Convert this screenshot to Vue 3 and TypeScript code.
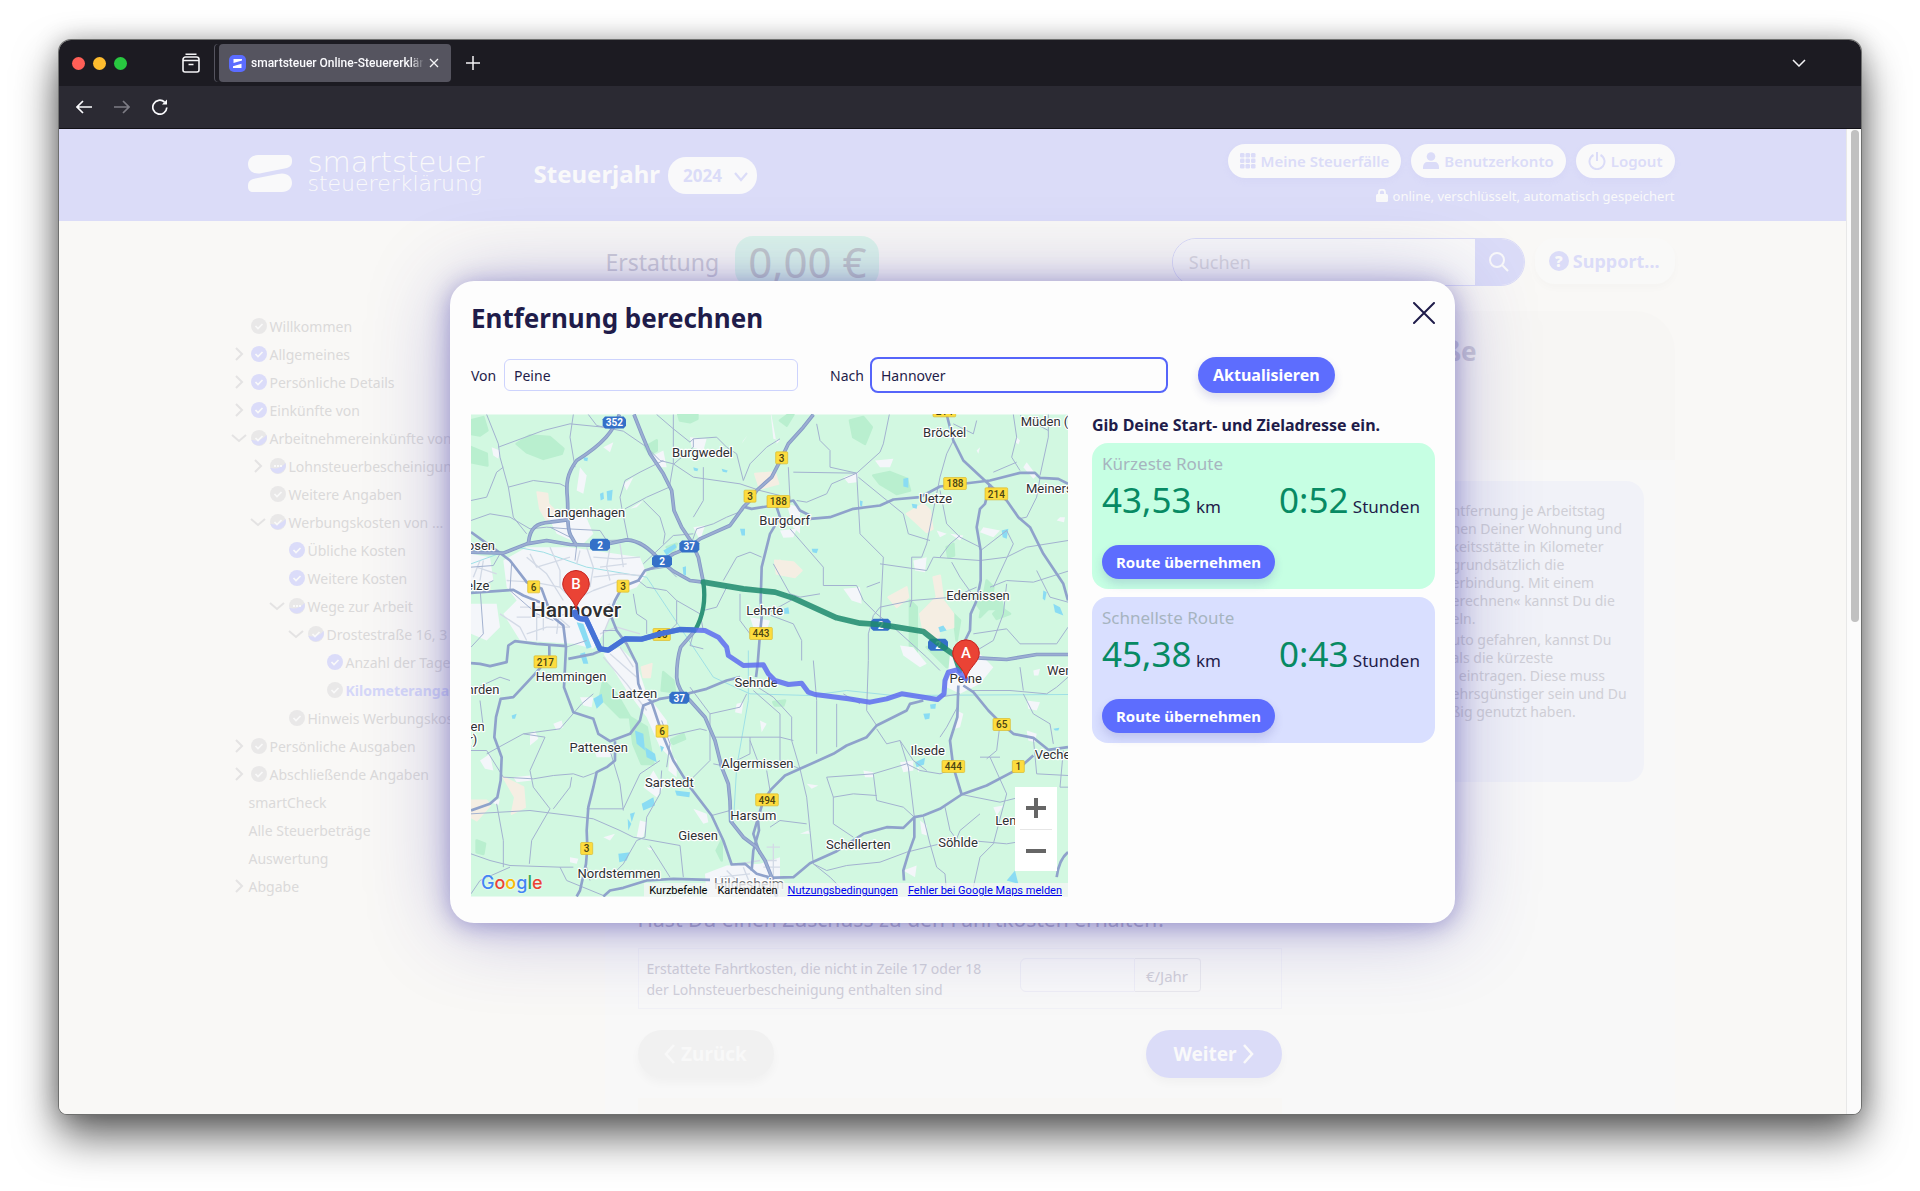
<script setup lang="ts">
import { ref } from 'vue'

type Status = 'done' | 'open' | 'half' | 'dots' | ''
interface NavItem {
  label: string
  level: number
  chevron: '' | 'right' | 'down'
  status: Status
  active?: boolean
}

const nav: NavItem[] = [
  { label: 'Willkommen', level: 0, chevron: '', status: 'open' },
  { label: 'Allgemeines', level: 0, chevron: 'right', status: 'done' },
  { label: 'Persönliche Details', level: 0, chevron: 'right', status: 'done' },
  { label: 'Einkünfte von', level: 0, chevron: 'right', status: 'done' },
  { label: 'Arbeitnehmereinkünfte von', level: 0, chevron: 'down', status: 'half' },
  { label: 'Lohnsteuerbescheinigung', level: 1, chevron: 'right', status: 'dots' },
  { label: 'Weitere Angaben', level: 1, chevron: '', status: 'open' },
  { label: 'Werbungskosten von ...', level: 1, chevron: 'down', status: 'half' },
  { label: 'Übliche Kosten', level: 2, chevron: '', status: 'done' },
  { label: 'Weitere Kosten', level: 2, chevron: '', status: 'done' },
  { label: 'Wege zur Arbeit', level: 2, chevron: 'down', status: 'dots' },
  { label: 'Drostestraße 16, 3', level: 3, chevron: 'down', status: 'half' },
  { label: 'Anzahl der Tage', level: 4, chevron: '', status: 'done' },
  { label: 'Kilometerangabe', level: 4, chevron: '', status: 'open', active: true },
  { label: 'Hinweis Werbungskosten', level: 2, chevron: '', status: 'open' },
  { label: 'Persönliche Ausgaben', level: 0, chevron: 'right', status: 'open' },
  { label: 'Abschließende Angaben', level: 0, chevron: 'right', status: 'open' },
  { label: 'smartCheck', level: 0, chevron: '', status: '' },
  { label: 'Alle Steuerbeträge', level: 0, chevron: '', status: '' },
  { label: 'Auswertung', level: 0, chevron: '', status: '' },
  { label: 'Abgabe', level: 0, chevron: 'right', status: '' },
]

const helpA = ['ntfernung je Arbeitstag', 'hen Deiner Wohnung und', 'keitsstätte in Kilometer', 'grundsätzlich die', 'erbindung. Mit einem', 'erechnen« kannst Du die', 'eln.']
const helpB = ['uto gefahren, kannst Du', 'als die kürzeste', 'l eintragen. Diese muss', 'ehrsgünstiger sein und Du', 'ßig genutzt haben.']

const from = ref('Peine')
const to = ref('Hannover')

const routes = [
  { name: 'Kürzeste Route', km: '43,53', time: '0:52', tone: 'green' },
  { name: 'Schnellste Route', km: '45,38', time: '0:43', tone: 'blue' },
]

const motorways = [
  'M478 42C462 90 430 130 350 180C320 220 318 250 322 290C326 340 318 380 332 405L350 436',
  'M522 42L545 100L570 160L610 220L635 270L642 330L665 380L695 425L715 470L730 545',
  'M705 690L662 740C652 770 650 810 650 830C652 860 665 880 690 900L735 950L765 1020L785 1100L805 1150L810 1200L812 1262L850 1310L890 1340L915 1380L935 1430L950 1488',
  'M33 455L130 458L200 430L260 420L330 432L420 435L500 418C540 420 570 445 600 480L640 512L690 540L730 545',
  'M600 485L640 460L690 440L720 415L760 397L810 375L850 320L870 300L890 270L935 230L965 172L985 130L1030 80L1060 42',
  'M205 428C210 380 230 368 270 365L322 358',
  'M1550 772L1640 777L1730 762L1824 762',
]
const highways = [
  'M600 495L555 510L535 540L488 558L465 600L450 640L470 690L500 730L530 790L535 850L545 875L575 905L605 995L640 1080L690 1160L755 1245L790 1320L815 1392L855 1390L890 1420L935 1432',
  'M33 395L110 450L150 480L200 545L245 565L265 620L285 655L310 675L318 740L315 800L312 860L340 935L400 955L415 1000L450 1022L510 1000L540 960L550 915L600 895L660 885L740 865L800 840L840 830',
  'M33 577L160 568L190 585L240 605',
  'M33 788L60 790L90 797L140 785L145 735L165 722L230 730L320 737',
  'M325 775L400 760L430 748',
  'M268 735L268 770L225 820L160 890L122 895L108 950L103 1010L125 1070L122 1140L112 1190L90 1210L33 1230',
  'M465 1022L465 1080L440 1100L410 1115L400 1160L385 1220L380 1290L382 1340L378 1390L360 1470L350 1488',
  'M430 1488L450 1470L490 1462L560 1440L640 1435L750 1438',
  'M920 1432L1000 1430L1050 1388L1130 1352L1210 1300L1280 1280L1330 1282L1363 1250L1390 1245L1440 1225L1505 1182L1580 1155L1675 1105L1720 1065',
  'M1495 855L1492 950L1470 1020L1480 1100L1505 1182',
  'M1363 1250L1363 1310L1345 1360L1330 1410L1332 1440',
  'M900 1360L880 1300L895 1250L910 1200L935 1165L975 1125L1020 1105L1120 1060L1160 1035L1220 1010L1250 975L1340 930L1350 910L1390 900',
  'M1510 855L1540 875L1585 930L1625 970L1660 1000L1720 1012L1765 1048L1824 1040',
  'M1460 42L1480 120L1510 180L1580 245L1640 300L1675 350L1710 380L1750 460L1810 550L1824 600',
  'M1050 355L1110 350L1180 325L1260 315L1300 297L1380 290L1440 258L1590 240L1680 217L1725 217L1740 232L1795 235L1824 250',
  'M855 320L875 325L940 315L1000 300L1020 330L1050 345',
  'M950 320L960 350L930 400L905 500L902 600L905 650L900 700L893 790L888 830',
  'M1590 250L1575 310L1560 325L1550 380L1562 450L1562 540L1550 600L1532 640L1530 690L1515 720',
  'M893 1250L897 1290L880 1350L875 1410',
  'M1790 1430C1795 1390 1805 1370 1824 1355',
]
const roads = [
  'M80 42L115 130L120 170L145 260L160 350L200 400',
  'M115 140L250 90L330 70L430 80L490 92L560 140L600 180L640 190L700 230L840 250L900 270L960 285',
  'M340 42L330 110L345 200', 'M385 42L410 75L440 82', 'M145 260L220 240L300 250L320 260',
  'M33 300L80 290L110 215L130 200', 'M33 500L100 495L120 460', 'M33 360L90 340L150 350L210 385L260 380L322 385',
  'M590 42L640 85L690 125L700 115L770 110L800 140L830 160L850 240', 'M640 42L640 190L628 260',
  'M628 260L560 290L495 325', 'M610 180L540 215L495 240L480 290L485 320L505 420', 'M550 300L600 350L615 400L610 430',
  'M730 200L730 300L700 350', 'M642 190L700 140L700 115', 'M690 440L710 385L760 370L800 350L850 330', 'M850 240L870 190L920 140L960 115',
  'M322 385L420 390L440 420L500 418', 'M330 410L270 380', 'M350 436L345 480',
  'M550 490L640 405L700 400', 'M790 540L830 470L870 455L905 470', 'M800 560L770 620L730 630', 'M840 580L840 660L870 700',
  'M535 540L560 560L620 570L650 600L650 670L620 700', 'M555 510L620 500L650 530', 'M520 580L530 640L560 660L560 700',
  'M470 690L430 690L430 748', 'M100 540L60 560L70 700L33 740', 'M155 485L150 570L230 640L280 660',
  'M318 740L380 720', 'M650 600L720 640L730 690',
  'M1288 42L1270 130L1260 155L1190 218L1115 250L1100 280L1040 305L1010 300', 'M1480 120L1460 160L1440 230L1400 430L1385 470L1355 470L1355 600L1350 620',
  'M1070 70L1080 120L1110 150L1110 200L1190 218', 'M1190 218L1200 400L1270 470L1260 670', 'M990 385L1090 500L1090 555L1190 555L1210 600L1250 640',
  'M1195 230L1330 340L1345 400L1410 420', 'M1260 490L1400 510L1420 470L1560 480L1640 470L1700 440L1824 420',
  'M1355 600L1260 620L1240 645L1225 700L1225 780L1220 930L1250 975', 'M1355 600L1480 590L1550 560', 'M1220 560L1260 545',
  'M1250 640L1300 680L1400 770L1440 810', 'M1440 270L1460 370L1500 410L1560 440', 'M1475 485L1500 530L1550 600', 'M1440 470L1470 430L1500 405',
  'M1562 450L1640 390L1660 430L1600 560', 'M1590 560L1640 540L1720 545L1824 512', 'M1640 550L1630 640L1600 720L1550 750', 'M1540 700L1640 685L1680 730L1790 730L1824 680',
  'M1740 232L1730 290L1700 350L1675 355', 'M1765 42L1765 110L1740 225', 'M1660 42L1670 110L1655 170L1680 210', 'M1765 90L1680 45', 'M1550 60L1540 100L1480 70',
  'M1730 510L1770 590L1824 605', 'M1600 215L1670 185', 'M985 200L990 300', 'M1000 215L1190 218', 'M940 490L990 580L1020 590L1080 580', 'M1010 590L920 640L1000 670L1025 720L1025 780',
  'M33 870L120 830L150 840', 'M60 900L70 980', 'M33 1050L80 1050L130 1130L220 1135L280 1125L340 1120L370 1130L410 1115',
  'M80 1060L190 1000L300 985L365 910L400 880', 'M190 1000L255 1010L210 1110L220 1160L270 1225', 'M33 1240L210 1230L330 1245L400 1255L480 1290L520 1310L660 1335',
  'M270 1225L215 1320L208 1390', 'M280 1225L330 1160L335 1130', 'M33 1360L90 1380L150 1395L300 1400L340 1400', 'M33 1480L60 1440L150 1400',
  'M300 1400L320 1440L430 1485', 'M380 1225L490 1225L540 1120L600 1080', 'M450 1050L480 1150L490 1230', 'M605 1110L600 1180L560 1250L555 1310L530 1320L490 1390L450 1430',
  'M570 1335L630 1430', 'M660 1335L670 1430', 'M390 1440L380 1400', 'M110 1210L130 1320L130 1400',
  'M605 960L630 1030L620 1100', 'M610 1010L720 985L740 990', 'M690 860L750 940L750 1080L690 1140', 'M750 940L840 920L860 880', 'M760 1090L785 1095',
  'M760 1010L960 1010L1000 1020', 'M880 870L960 940L960 1080L1020 1105', 'M893 860L940 890L995 950L995 1020L1020 1105', 'M870 1010L870 1060L830 1080', 'M755 1245L810 1230',
  'M930 1170L920 1110', 'M900 1100L870 1020', 'M1020 1105L1040 1190L1050 1290L1060 1390', 'M1100 1130L1240 1120L1340 1090L1380 1110', 'M1250 985L1280 1030L1320 1020L1345 1100L1363 1250',
  'M1240 1120L1250 1200L1330 1220L1363 1250', 'M1100 1130L1120 1190L1120 1270L1180 1310', 'M1120 1190L1180 1180L1250 1185', 'M930 1280L960 1260L1040 1270',
  'M1060 780L1070 900L1070 1060', 'M1130 910L1130 1040', 'M1150 880L1200 910', 'M1505 1182L1620 1205L1640 1200L1680 1190', 'M1590 1070L1640 1180L1600 1330L1560 1370L1540 1460',
  'M1060 1390L1110 1430L1150 1470', 'M1060 1390L1100 1410L1160 1395L1260 1385L1340 1355L1440 1330', 'M1390 1250L1410 1330L1430 1400L1455 1420L1460 1480', 'M1380 1110L1440 1120L1480 1105',
  'M1455 1220L1470 1290L1500 1330', 'M1560 1240L1500 1290L1480 1340', 'M1530 1320L1640 1330L1700 1320', 'M1320 1020L1360 1080L1400 1110',
  'M1492 920L1460 980L1440 1010', 'M1530 870L1650 870L1760 880L1790 860L1824 830', 'M1680 800L1690 870', 'M1620 970L1610 1050L1580 1075', 'M1690 880L1720 940L1770 970L1780 1030', 'M1500 880L1440 890',
  'M1720 1012L1730 1120L1824 1125', 'M1810 1050L1800 1160L1824 1160', 'M700 700L690 735L730 745', 'M1560 1070L1620 1070',
]
const cityStreets = [
  'M140 540L220 545L300 560L340 600', 'M200 470L260 520L310 600', 'M270 440L300 510L300 560', 'M380 440L400 500L390 560', 'M400 470L470 475L540 470', 'M420 500L500 490', 'M400 530L480 520L540 525', 'M450 440L440 500L450 540', 'M480 430L490 500', 'M340 600L400 570L470 545', 'M180 620L260 620L330 680', 'M170 650L260 650L330 640', 'M200 700L260 680L330 680', 'M180 680L200 720', 'M230 640L230 720', 'M250 600L250 690', 'M300 620L290 700', 'M120 640L180 680', 'M420 700L470 680L540 700', 'M400 640L450 610', 'M420 620L450 650L430 700', 'M360 450L350 490', 'M210 460L230 500L330 470', 'M430 770L500 850L560 930', 'M450 760L530 830', 'M480 740L520 800', 'M520 880L560 870', 'M840 1390L900 1380', 'M800 1410L830 1440', 'M850 1400L870 1450', 'M910 1380L950 1380M910 1400L960 1400M920 1340L960 1340M940 1330L940 1430', 'M780 1430L870 1420', 'M60 480L40 530M70 480L60 540M50 500L110 520',
]
const woods = [
  '33,60 70,50 82,90 60,105 33,100', '170,130 210,105 270,110 310,145 305,160 250,175 200,155', '33,140 80,160 82,195 33,185', '655,42 712,42 712,55 690,65 660,60', '555,140 590,120 590,150 570,160',
  '1170,60 1210,50 1235,80 1215,130 1180,110', '1240,225 1290,215 1340,235 1350,270 1310,280 1260,250', '410,580 460,570 460,620 430,640', '360,550 410,520 415,545 370,575', '610,815 640,840 645,875 605,870',
  '1350,600 1370,620 1370,780 1350,740', '1580,540 1600,560 1590,620 1560,650', '1650,640 1610,655 1600,640 1620,620', '1480,640 1500,660 1490,720', '430,840 470,880 510,950 480,950 420,890', '510,950 560,980 580,1090 545,1090 520,1030',
  '630,1020 670,1000 675,1015 640,1030', '770,1350 785,1320 785,1380', '50,1320 75,1330 70,1360 50,1355', '1460,440 1480,430 1482,465 1465,470', '620,440 650,430 640,460', '1400,740 1450,740 1490,790 1460,800', '940,905 975,900 970,915 945,915', '1530,580 1620,590 1630,625 1560,625', '960,60 985,42 1000,42 980,75',
]
const sand = [
  '232,275 262,280 265,310 290,335 260,360 240,325', '885,220 945,215 955,250 900,265', '1340,340 1390,310 1410,330 1418,385 1400,395', '945,480 1000,485 1025,510 1005,530 950,520', '1285,590 1340,560 1345,590 1310,620',
  '1380,640 1430,590 1420,530 1440,525 1450,600 1480,640 1480,680 1440,690 1430,735 1390,690', '130,1130 190,1160 195,1220 155,1240 165,1190', '33,1200 80,1200 90,1215 50,1260 33,1250', '545,800 575,790 570,830 550,830', '945,485 960,480 960,520 950,510',
]
const towns = [
  '130,480 200,440 330,440 400,450 540,470 560,520 530,560 480,580 430,700 400,745 340,730 180,720 130,640 170,600 140,560', '330,330 370,330 400,400 370,430 335,420 290,400 265,350', '430,760 480,740 530,790 560,880 620,960 640,1080 600,1040 560,950 500,870',
  '33,460 90,470 100,540 33,560', '33,610 110,610 120,680 80,720 33,700', '570,170 610,150 620,200 590,200', '690,110 740,115 730,150 695,140', '700,380 735,375 720,420', '960,390 1010,385 1000,410 970,412', '980,310 1020,320 1020,400 1000,380',
  '1150,230 1195,215 1190,245 1165,248', '1245,180 1300,175 1290,200 1260,200', '1360,480 1400,470 1395,515 1365,510', '1150,565 1200,560 1205,610 1175,600', '870,650 930,660 920,690 880,680', '1320,735 1360,740 1400,790 1380,800 1330,765',
  '1470,760 1550,750 1600,800 1560,850 1500,880 1460,860', '1680,120 1670,110 1667,125 1675,132', '360,890 400,890 395,920 370,915', '280,970 305,960 310,980 290,990', '400,1040 460,1050 450,1070 410,1070', '230,650 290,640 300,700 250,720',
  '60,1080 90,1060 100,1110 75,1105', '160,1130 210,1125 215,1140 170,1145', '735,1420 800,1395 900,1390 960,1370 960,1488 740,1488', '700,1225 740,1240 745,1265 730,1270', '630,1060 650,1080 650,1130 625,1110', '540,1260 560,1265 550,1310 530,1310',
  '1320,1085 1360,1080 1360,1110 1330,1115', '1210,1110 1240,1115 1240,1130 1215,1130', '1330,1410 1370,1395 1365,1430', '1380,1260 1400,1275 1400,1305 1385,1300', '1490,930 1510,940 1500,980 1485,985', '1700,900 1740,905 1730,930 1705,925', '1700,990 1730,1000 1725,1025 1705,1020',
  '1720,810 1740,805 1735,825 1722,825', '830,910 850,905 845,940 825,935', '900,960 920,970 905,995', '550,1160 580,1110 610,1160 590,1190', '1690,200 1700,185 1730,225 1720,235', '1430,390 1460,400 1440,410', '1470,400 1510,405 1500,420', '1790,360 1800,350 1815,350 1812,365',
  '210,1000 225,990 235,1015 210,1035', '360,200 380,225 370,280 350,270', '95,140 120,150 115,175 100,165', '430,140 460,125 450,155', '490,250 520,230 500,270', '510,325 550,300 530,320', '850,120 862,105 845,130', '930,20 940,115 960,120 950,130', '120,1195 115,1215 95,1205', '330,1370 355,1375 350,1390 330,1385',
  '430,1310 465,1300 450,1320', '560,1340 580,1345 570,1350', '1400,100 1420,95 1410,115', '1550,150 1560,140 1555,160', '1380,1110 1375,1115 1370,1090', '1040,1150 1075,1155 1055,1165', '1050,1300 1020,1300 1045,1290', '1600,1220 1630,1215 1610,1245', '1560,395 1570,380 1620,390 1600,410',
]
const lakes = [
  '420,280 430,275 432,295 422,300', '440,272 458,268 455,300 442,300', '610,450 645,430 650,440 620,465', '668,500 678,497 678,525 670,522', '350,665 370,670 395,740 380,745', '360,760 375,755 385,790 370,790', '400,895 425,880 430,905 410,925', '525,990 550,1000 555,1050 530,1030',
  '555,1040 585,1060 590,1085 560,1070', '545,1210 580,1190 585,1215 550,1230', '510,1240 525,1235 515,1265', '475,1360 510,1355 500,1380 478,1385', '645,1170 690,1175 688,1190 650,1185', '1330,235 1345,232 1345,262 1330,258', '1355,310 1372,312 1370,325 1358,322', '1055,445 1075,445 1070,458 1058,455',
  '970,625 985,620 988,640 972,640', '1625,390 1645,385 1640,415 1628,410', '1780,610 1800,620 1810,645 1785,635', '1365,1085 1395,1072 1392,1092 1370,1100', '1390,940 1410,938 1408,955 1395,957', '1410,912 1428,910 1426,925 1412,925', '1640,1440 1665,1410 1675,1450', '1750,570 1760,575 1755,600 1748,595', '1435,680 1450,675 1460,690 1440,695',
  '840,385 855,385 855,405 845,405', '700,200 715,205 712,212 702,210', '370,170 384,172 382,182 372,180', '1200,300 1208,302 1206,318 1200,315', '155,945 170,940 165,955 157,955', '600,1035 612,1040 605,1055', '570,1150 590,1155 580,1165', '1780,985 1798,982 1795,990 1785,990', '503,1255 514,1270 505,1290', '785,205 803,210 800,216 788,214',
]
const labels: [string, number, number, string][] = [
  ['Müden (Aller)', 1682, 77, 'start'], ['Bröckel', 1454, 110, 'middle'], ['Burgwedel', 727, 169, 'middle'], ['Langenhagen', 378, 350, 'middle'], ['Burgdorf', 974, 372, 'middle'], ['Uetze', 1427, 306, 'middle'], ['Meinersen', 1698, 278, 'start'],
  ['Seelze', 88, 568, 'end'], ['Garbosen', 105, 447, 'end'], ['Lehrte', 914, 643, 'middle'], ['Edemissen', 1554, 597, 'middle'], ['Hemmingen', 333, 840, 'middle'], ['Laatzen', 523, 893, 'middle'], ['Gehrden', 118, 881, 'end'],
  ['Springen', 74, 991, 'end'], ['(Deister)', 52, 1029, 'end'], ['Pattensen', 416, 1054, 'middle'], ['Sehnde', 888, 858, 'middle'], ['Algermissen', 892, 1102, 'middle'], ['Sarstedt', 628, 1159, 'middle'], ['Harsum', 880, 1257, 'middle'], ['Giesen', 714, 1317, 'middle'],
  ['Nordstemmen', 477, 1432, 'middle'], ['Peine', 1517, 848, 'middle'], ['Wendeburg', 1761, 822, 'start'], ['Ilsede', 1403, 1063, 'middle'], ['Vechelde', 1724, 1076, 'start'], ['Schellerten', 1195, 1346, 'middle'], ['Söhlde', 1494, 1338, 'middle'], ['Lengede', 1606, 1274, 'start'],
]
const shields: [string, number, number][] = [
  ['3', 870, 287], ['188', 955, 303], ['3', 965, 172], ['188', 1485, 249], ['214', 1609, 280], ['6', 221, 559], ['3', 489, 557], ['65', 605, 702], ['443', 903, 699], ['217', 256, 784], ['6', 606, 992], ['494', 921, 1198], ['3', 380, 1344], ['65', 1625, 972], ['444', 1480, 1098], ['1', 1675, 1098], ['214', 1453, 31],
]
const autobahns: [string, number, number][] = [['352', 463, 66], ['2', 420, 433], ['2', 606, 482], ['37', 688, 438], ['37', 658, 892], ['2', 1262, 673], ['2', 1434, 733]]
const pins: [string, number, number][] = [['B', 348, 550], ['A', 1518, 758]]
const shieldWidth = (s: string) => (s.length === 3 ? 68 : s.length === 2 ? 52 : 36)
</script>

<template>
  <div class="desktop">
    <div class="window">
      <div class="tabbar">
        <div class="lights"><i class="red"></i><i class="yellow"></i><i class="green"></i></div>
        <button class="plain tabs-icon" aria-label="Tabübersicht">
          <svg width="18" height="20" viewBox="0 0 18 20" fill="none" stroke="#f4f4f6" stroke-width="1.6"><path d="M3.500 1.200h11" /><path d="M1 8V6.500A2.500 2.500 0 0 1 3.500 4h11A2.500 2.500 0 0 1 17 6.500V17a2 2 0 0 1-2 2H3a2 2 0 0 1-2-2V7.500h16M6.500 11.500h5" /></svg>
        </button>
        <div class="tab">
          <svg class="fav" width="17" height="17" viewBox="0 0 17 17"><rect width="17" height="17" rx="5" fill="#5b6cff" /><path d="M4.500 4h8.500v1.500L4.500 8zM12.500 8.700L4 11.200V13h8.500z" fill="#fff" /></svg>
          <span>smartsteuer Online-Steuererklärung</span>
          <button class="plain" aria-label="Tab schließen"><svg width="10" height="10" viewBox="0 0 10 10" stroke="#f4f4f6" stroke-width="1.300"><path d="M1 1l8 8M9 1l-8 8" /></svg></button>
        </div>
        <button class="plain plus" aria-label="Neuer Tab"><svg width="14" height="14" viewBox="0 0 14 14" stroke="#f4f4f6" stroke-width="1.500"><path d="M7 0v14M0 7h14" /></svg></button>
        <button class="plain all" aria-label="Alle Tabs"><svg width="14" height="8" viewBox="0 0 14 8" fill="none" stroke="#f4f4f6" stroke-width="1.500"><path d="M1 1l6 6 6-6" /></svg></button>
      </div>
      <div class="toolbar">
        <button class="plain" aria-label="Zurück"><svg width="16" height="14" viewBox="0 0 16 14" fill="none" stroke="#fbfbfe" stroke-width="1.700"><path d="M16 7H1M7 1L1 7l6 6" /></svg></button>
        <button class="plain" aria-label="Vor"><svg width="16" height="14" viewBox="0 0 16 14" fill="none" stroke="#7d7c85" stroke-width="1.700"><path d="M0 7h15M9 1l6 6-6 6" /></svg></button>
        <button class="plain" aria-label="Neu laden"><svg width="16" height="16" viewBox="0 0 16 16" fill="none" stroke="#fbfbfe" stroke-width="1.700"><path d="M14.800 8.500A7 7 0 1 1 12.500 3" /><path d="M10 5.500h5V.5z" fill="#fbfbfe" stroke="none" /></svg></button>
      </div>

      <div class="view">
        <div class="page">
          <header class="band">
            <div class="wrap head">
              <svg class="mark" width="44" height="37" viewBox="0 0 44 37" fill="#f9f9fa"><path d="M10 0h29c3 0 5 2 5 5v2c0 3-2 5-5 6L14 18C6 20 0 16 0 9 0 4 4 0 10 0zM34 37H5c-3 0-5-2-5-5v-2c0-3 2-5 5-6l25-5c8-2 14 2 14 9 0 5-4 9-10 9z" /></svg>
              <div class="brand"><span>smartsteuer</span><small>steuererklärung</small></div>
              <label class="year-label" for="year">Steuerjahr</label>
              <div class="year">
                <select id="year"><option>2024</option></select>
                <svg width="14" height="10" viewBox="0 0 14 10" fill="none" stroke="#dbdcf8" stroke-width="2.200"><path d="M1 1l6 7 6-7" /></svg>
              </div>
              <div class="account">
                <div class="pills">
                  <button><svg width="16" height="16" viewBox="0 0 16 16" fill="#dbdcf8"><template v-for="r in 3" :key="r"><rect v-for="c in 3" :key="c" :x="(c - 1) * 5.5" :y="(r - 1) * 5.5" width="4.500" height="4.500" rx="1.300" /></template></svg>Meine Steuerfälle</button>
                  <button><svg width="16" height="17" viewBox="0 0 16 17" fill="#dbdcf8"><circle cx="8" cy="4.500" r="4.300" /><path d="M0 17v-2c0-3 2-5 4-5h8c2 0 4 2 4 5v2z" /></svg>Benutzerkonto</button>
                  <button><svg width="18" height="18" viewBox="0 0 18 18" fill="none" stroke="#dbdcf8" stroke-width="2"><path d="M5.500 3a7.500 7.500 0 1 0 7 0M9 0v9" /></svg>Logout</button>
                </div>
                <p><svg width="12" height="13" viewBox="0 0 12 13"><rect y="5" width="12" height="8" rx="1.500" fill="#f9f9fa" /><path d="M3 6V3.500a3 3 0 0 1 6 0V6" fill="none" stroke="#f9f9fa" stroke-width="1.800" /></svg>online, verschlüsselt, automatisch gespeichert</p>
              </div>
            </div>
          </header>

          <div class="wrap summary">
            <span class="refund">Erstattung</span><output class="amount">0,00 €</output>
            <form class="search" @submit.prevent>
              <input type="search" placeholder="Suchen" aria-label="Suchen" />
              <button aria-label="Suche starten"><svg width="20" height="20" viewBox="0 0 20 20" fill="none" stroke="#f9f9fa" stroke-width="2"><circle cx="8" cy="8" r="7" /><path d="M13 13l6 6" /></svg></button>
            </form>
            <button class="support"><b>?</b>Support...</button>
          </div>

          <div class="wrap columns">
            <nav>
              <a v-for="n in nav" :key="n.label" href="#" :class="{ active: n.active }" :style="{ paddingLeft: n.level * 19 + 'px' }">
                <svg class="chev" width="18" height="14" viewBox="1 0 18 14" fill="none" stroke="#e4e3e3" stroke-width="2">
                  <path v-if="n.chevron === 'right'" d="M6 1l6 6-6 6" /><path v-if="n.chevron === 'down'" d="M2 4l7 6 7-6" />
                </svg>
                <svg v-if="n.status" class="state" width="16" height="16" viewBox="0 0 16 16">
                  <circle cx="8" cy="8" r="8" :fill="n.status === 'done' ? '#dbdcf9' : '#e9e8e8'" />
                  <path v-if="n.status === 'half' || n.status === 'dots'" d="M15.500 5A8 8 0 1 1 .2 9.800C6 11.500 11 10 15.500 5z" fill="#dbdcf9" />
                  <path v-if="n.status !== 'dots'" d="M4.500 8l2.500 2.500 4.500-4.500" fill="none" stroke="#f9f9f9" stroke-width="1.700" />
                  <path v-else d="M4 8h2M7 8h2M10 8h2" stroke="#f9f9f9" stroke-width="2" />
                </svg>
                <span>{{ n.label }}</span>
              </a>
            </nav>
            <main>
              <div class="card-head"><h1>ße</h1></div>
              <div class="card-body">
                <section class="question">
                  <h2>Hast Du einen Zuschuss zu den Fahrtkosten erhalten?</h2>
                  <div class="field">
                    <label for="refund">Erstattete Fahrtkosten, die nicht in Zeile 17 oder 18<br />der Lohnsteuerbescheinigung enthalten sind</label>
                    <div class="unit"><input id="refund" type="text" /><span>€/Jahr</span></div>
                  </div>
                  <div class="steps">
                    <button class="back"><svg width="11" height="20" viewBox="0 0 11 20" fill="none" stroke="#f8f8f8" stroke-width="2.600"><path d="M10 1L2 10l8 9" /></svg>Zurück</button>
                    <button class="next">Weiter<svg width="11" height="20" viewBox="0 0 11 20" fill="none" stroke="#f9f9fa" stroke-width="2.600"><path d="M1 1l8 9-8 9" /></svg></button>
                  </div>
                  <div class="strip"></div>
                </section>
                <aside>
                  <p><template v-for="l in helpA" :key="l">{{ l }}<br /></template></p>
                  <p><template v-for="l in helpB" :key="l">{{ l }}<br /></template></p>
                </aside>
              </div>
            </main>
          </div>
        </div>

        <div class="overlay">
          <div class="modal" role="dialog" aria-labelledby="dialog-title">
            <div class="modal-head">
              <h2 id="dialog-title">Entfernung berechnen</h2>
              <button class="plain" aria-label="Schließen"><svg width="22" height="22" viewBox="0 0 22 22" stroke="#1f1c4a" stroke-width="2" stroke-linecap="round"><path d="M1 1l20 20M21 1L1 21" /></svg></button>
            </div>
            <form class="query" @submit.prevent>
              <label for="from">Von</label><input id="from" v-model="from" class="from" type="text" />
              <label for="to">Nach</label><input id="to" v-model="to" class="to" type="text" />
              <button class="primary">Aktualisieren</button>
            </form>
            <div class="result">
              <div class="map">
                <svg class="canvas" viewBox="33 42 1791 1446" role="img" aria-label="Karte Hannover – Peine">
                  <rect x="33" y="42" width="1791" height="1446" fill="#d2f8e1" />
                  <polygon v-for="p in woods" :key="p" :points="p" fill="#b9efcf" stroke="#b9efcf" stroke-width="8" stroke-linejoin="round" />
                  <polygon v-for="p in sand" :key="p" :points="p" fill="#f5eee3" stroke="#f5eee3" stroke-width="6" stroke-linejoin="round" />
                  <polygon v-for="p in towns" :key="p" :points="p" fill="#f4f6fa" />
                  <polygon v-for="p in lakes" :key="p" :points="p" fill="#8adcf3" />
                  <path d="M33 490L170 440L250 455L380 500L560 530L620 620L700 740L760 830L870 880L1050 885L1160 870L1300 885L1824 882M865 750L865 900L830 1100L820 1270" fill="none" stroke="#9fe0e6" stroke-width="3" />
                  <g fill="none" stroke-linejoin="round">
                    <path v-for="d in cityStreets" :key="d" :d="d" stroke="#d3dae6" stroke-width="4" />
                    <path v-for="d in roads" :key="d" :d="d" stroke="#a3b2d0" stroke-width="3" />
                    <path v-for="d in highways" :key="d" :d="d" stroke="#8fa2cb" stroke-width="8" />
                    <path v-for="d in motorways" :key="d" :d="d" stroke="#8499c6" stroke-width="11" />
                    <path v-for="d in motorways" :key="'i' + d" :d="d" stroke="#9badd2" stroke-width="6" />
                  </g>
                  <g v-for="(s, i) in shields" :key="'s' + i">
                    <rect :x="s[1] - shieldWidth(s[0]) / 2" :y="s[2] - 18" :width="shieldWidth(s[0])" height="36" rx="3" fill="#fddc3e" stroke="#d8b92e" stroke-width="2" />
                    <text class="shield" :x="s[1]" :y="s[2] + 11">{{ s[0] }}</text>
                  </g>
                  <g v-for="(s, i) in autobahns" :key="'a' + i">
                    <path :transform="`translate(${s[1]} ${s[2]})`" :d="s[0].length === 3 ? 'M-28-18H28L35-10V10L28 18H-28L-35 10V-10z' : 'M-22-18H22L30-10V10L22 18H-22L-30 10V-10z'" fill="#3470c8" />
                    <text class="autobahn" :x="s[1]" :y="s[2] + 11">{{ s[0] }}</text>
                  </g>
                  <text v-for="l in labels" :key="l[0]" class="town" :x="l[1]" :y="l[2]" :text-anchor="l[3]">{{ l[0] }}</text>
                  <text class="town dim" x="867" y="1464" text-anchor="middle">Hildesheim</text>
                  <text class="town city" x="348" y="648" text-anchor="middle">Hannover</text>
                  <g fill="none" stroke-linejoin="round" stroke-linecap="round">
                    <path d="M730 545L850 565L945 575L1000 593L1130 652L1200 668L1260 672L1310 680L1390 693L1440 733L1485 765L1500 810" stroke="#1f8a6d" stroke-opacity=".85" stroke-width="17" />
                    <path d="M730 545C738 600 728 650 705 690" stroke="#2f9479" stroke-width="13" />
                    <path d="M345 635C345 650 358 658 378 655L420 745L445 749L495 715L545 716L600 700L660 687L735 690L775 710L800 740L805 765L850 795L910 793L925 820L945 840L985 852L1025 848L1045 875L1065 882L1165 895L1230 905L1280 895L1325 880L1400 892L1432 897L1452 880L1455 840L1465 815L1490 808L1518 835" stroke="#5e6cf0" stroke-opacity=".85" stroke-width="15" />
                    <path d="M345 635C345 650 358 658 378 655L420 745L445 749L495 715L545 716L600 700L660 687L700 688" stroke="#4672d6" stroke-width="16" />
                  </g>
                  <g v-for="p in pins" :key="p[0]" :transform="`translate(${p[1]} ${p[2]})`">
                    <path d="M0 76C-6 44-40 28-40 0A40 40 0 0 1 40 0C40 28 6 44 0 76z" fill="#ea4335" stroke="#c5221f" stroke-width="3" />
                    <text class="pin" x="0" y="15">{{ p[0] }}</text>
                  </g>
                </svg>
                <div class="zoom"><button aria-label="Vergrößern"><svg width="20" height="20" viewBox="0 0 20 20" fill="#666"><path d="M8 0h4v8h8v4h-8v8H8v-8H0V8h8z" /></svg></button><button aria-label="Verkleinern"><svg width="20" height="20" viewBox="0 0 20 20" fill="#666"><path d="M0 8h20v4H0z" /></svg></button></div>
                <div class="google" aria-label="Google"><span>G</span><span>o</span><span>o</span><span>g</span><span>l</span><span>e</span></div>
                <div class="legal"><button class="plain">Kurzbefehle</button><button class="plain">Kartendaten</button><a href="#">Nutzungsbedingungen</a><a href="#">Fehler bei Google Maps melden</a></div>
              </div>
              <div class="routes">
                <h3>Gib Deine Start- und Zieladresse ein.</h3>
                <section v-for="r in routes" :key="r.name" class="route" :class="r.tone">
                  <h4>{{ r.name }}</h4>
                  <div class="facts"><p><strong>{{ r.km }}</strong> km</p><p><strong>{{ r.time }}</strong> Stunden</p></div>
                  <button class="primary">Route übernehmen</button>
                </section>
              </div>
            </div>
          </div>
        </div>
        <div class="scroll"><i></i></div>
      </div>
    </div>
  </div>
</template>

<style>
body { background: #fff; }
</style>
<style scoped>
* { box-sizing: border-box; }
h1, h2, h3, h4, p { margin: 0; }
.desktop { height: 100vh; padding: 40px 59px 77px; overflow: hidden; font-family: "Noto Sans", "Open Sans", sans-serif; color: #1f1c4a; }
button, input, select { font: inherit; color: inherit; margin: 0; }
button { border: 0; cursor: pointer; white-space: nowrap; }
.plain { display: flex; padding: 0; background: none; }
.window { display: flex; flex-direction: column; height: 100%; border-radius: 12px 12px 8px 8px; overflow: hidden; box-shadow: 0 0 0 1px #6f706f, 0 22px 44px rgba(0, 0, 0, .62), 0 0 24px rgba(0, 0, 0, .25); background: #f9f8f6; }

.tabbar { display: flex; align-items: center; height: 46px; flex: none; background: #1c1b22; font-family: Roboto, sans-serif; color: #fbfbfe; }
.lights { display: flex; gap: 8px; margin-left: 13px; }
.lights i { width: 13px; height: 13px; border-radius: 50%; }
.red { background: #ff5f57; }
.yellow { background: #febc2e; }
.green { background: #28c840; }
.tabs-icon { margin-left: 55px; }
.tab { display: flex; align-items: center; gap: 5px; width: 232px; height: 38px; margin-left: 19px; padding: 0 12px 0 10px; border-radius: 4px; background: #55545f; box-shadow: -4px 0 0 #1c1b22, -5px 0 0 #55545f; font-size: 12px; font-weight: 500; }
.tab span { flex: 1; overflow: hidden; white-space: nowrap; mask-image: linear-gradient(90deg, #000 92%, transparent); }
.plus { margin-left: 15px; }
.all { margin: 0 55px 0 auto; }
.toolbar { display: flex; align-items: center; gap: 22px; height: 43px; flex: none; padding-left: 17px; background: #2b2a33; border-bottom: 1px solid #121117; }

.view { position: relative; display: flex; flex: 1; min-height: 0; }
.page { flex: 1; min-width: 0; overflow: hidden; background: #f9f8f6; color: #dad9dc; }
.scroll { width: 15px; flex: none; padding: 1px 2px 0 4px; background: #fbfbfb; border-left: 1px solid #e8e8e8; }
.scroll i { display: block; width: 8px; height: 50%; border-radius: 4px; background: #c1c1c1; }
.wrap { max-width: 1444px; margin: 0 auto; }

.band { background: #dbdcf8; color: #f9f9fa; }
.head { display: flex; align-items: center; height: 92px; padding-left: 17px; }
.mark { margin-bottom: 4px; }
.brand { display: flex; flex-direction: column; width: 210px; margin: 0 0 4px 16px; font-family: "DejaVu Sans Light", "DejaVu Sans", sans-serif; font-weight: 200; }
.brand span { font-size: 29px; line-height: 22px; }
.brand small { font-size: 22px; line-height: 22px; }
.year-label { margin-left: 16px; font-size: 24px; font-weight: 700; line-height: 30px; margin-bottom: 2px; }
.year { position: relative; margin-left: 8px; }
.year select { appearance: none; width: 89px; height: 37px; padding: 0 0 0 15px; border: 0; border-radius: 18px; background: #f9f9fa; color: #dbdcf8; font-size: 17px; font-weight: 700; }
.year svg { position: absolute; right: 9px; top: 15px; }
.account { margin: 0 0 2px auto; text-align: right; font-size: 13px; }
.pills { display: flex; justify-content: flex-end; gap: 10px; margin-bottom: 9px; }
.pills button { display: flex; align-items: center; gap: 5px; height: 34px; padding: 0 12px; border-radius: 17px; background: #f9f9fa; color: #dbdcf8; font-size: 15px; font-weight: 600; box-shadow: 0 3px 6px rgba(180, 182, 240, .12); }
.account p { line-height: 18px; }
.account p svg { margin-right: 5px; vertical-align: -1px; }

.summary { display: flex; align-items: flex-start; height: 90px; padding: 15px 0 0 375px; }
.refund { font-size: 23px; line-height: 52px; color: #cfcdd8; }
.amount { margin-left: 16px; padding: 0 13px; border-radius: 18px; background: #dcf5eb; font-size: 42px; line-height: 52px; color: #c2c9cb; }
.search { display: flex; width: 353px; height: 48px; margin: 2px 0 0 auto; border: 1px solid #dbdcf8; border-radius: 24px; overflow: hidden; }
.search input { flex: 1; min-width: 0; padding: 0 16px; border: 0; outline: 0; background: #f9f9f9; font-size: 18px; }
.search input::placeholder { color: #dcdbdf; opacity: 1; }
.search button { width: 49px; background: #dbdcf8; padding-top: 6px; }
.support { display: flex; align-items: center; gap: 4px; height: 46px; margin: 2px 0 0 10px; padding: 0 15px 0 14px; border-radius: 20px; background: #f9f9f8; color: #dbdcf8; font-size: 18px; font-weight: 700; box-shadow: 0 4px 8px rgba(0, 0, 0, .02); }
.support b { width: 20px; height: 20px; border-radius: 50%; background: #dbdcf8; color: #f9f9f9; font-size: 15px; line-height: 20px; }

.columns { display: grid; grid-template-columns: 374px 1fr; }
nav { overflow: hidden; padding-top: 1px; }
nav a { display: flex; align-items: center; height: 28px; color: #dbdada; font-size: 14px; text-decoration: none; white-space: nowrap; }
nav a.active { color: #d5d7f9; font-weight: 700; }
.chev { flex: none; }
.state { flex: none; margin: 0 3px 0 2px; }
.card-head { display: flex; justify-content: flex-end; height: 149px; padding: 22px 198px 0 0; border-radius: 0 40px 0 0; background: #f7f6f4; }
.card-head h1 { font-size: 26px; color: #cfcdd8; }
.card-body { display: grid; grid-template-columns: 644px 204px; justify-content: space-between; padding: 21px 31px 0 33px; background: #f8f8f8; }
aside { align-self: start; height: 301px; padding: 21px 12px; border-radius: 18px; background: #f1f2f8; color: #cfcfd6; font-size: 14px; line-height: 18px; white-space: nowrap; }
aside p { margin-bottom: 3px; }
.question { padding-top: 424px; }
.question h2 { font-size: 21px; font-weight: 400; line-height: 28px; color: #bcbace; }
.field { display: flex; align-items: flex-start; justify-content: space-between; height: 61px; margin: 15px 0 21px; padding: 9px 80px 0 8px; border: 1px solid #f1f1f7; color: #d0cfd8; font-size: 14px; line-height: 21px; white-space: nowrap; }
.unit { display: flex; width: 181px; height: 34px; }
.unit input { width: 115px; border: 1px solid #eeeef6; border-radius: 6px 0 0 6px; background: #f8f8f9; }
.unit span { flex: 1; border: 1px solid #e9e9ee; border-left: 0; border-radius: 0 4px 4px 0; text-align: center; line-height: 34px; font-size: 15px; }
.steps { display: flex; justify-content: space-between; }
.steps button { display: flex; align-items: center; justify-content: center; gap: 6px; width: 136px; height: 48px; border-radius: 24px; font-size: 19px; font-weight: 700; box-shadow: 0 5px 10px rgba(0, 0, 0, .03); }
.back { background: #f1f1f1; color: #f8f8f8; }
.next { background: #dbdcf8; color: #f9f9fa; }
.strip { height: 40px; margin-top: 20px; background: #f8f7f5; }

.overlay { position: absolute; inset: 0 15px 0 0; display: flex; justify-content: center; align-items: flex-start; padding-top: 152px; overflow: hidden; }
.modal { width: 1005px; padding: 19px 20px 26px 21px; border-radius: 24px; background: #fdfdfd; box-shadow: 0 3px 24px rgba(64, 56, 165, .42), 0 4px 80px rgba(64, 56, 165, .34); }
.modal-head { display: flex; justify-content: space-between; align-items: flex-start; }
.modal-head h2 { font-size: 26px; line-height: 36px; }
.modal-head .plain { margin: 2px 0 0; }
.query { display: flex; align-items: center; height: 36px; margin-top: 21px; font-size: 14px; }
.query label { width: 33px; }
.query label + input { outline: 0; background: #fdfdfd; }
.from { width: 294px; height: 32px; padding: 0 9px; border: 1px solid #cdd3fd; border-radius: 6px; }
.query .from + label { width: 40px; margin-left: 32px; }
.to { width: 298px; height: 36px; padding: 0 9px; border: 2px solid #5665fa; border-radius: 8px; }
.primary { height: 34px; padding: 0 14px; border-radius: 18px; background: #5d6dfe; color: #fff; font-size: 15px; font-weight: 700; box-shadow: 0 5px 10px rgba(50, 50, 150, .16); }
.query .primary { height: 36px; margin-left: 30px; padding: 0 15px; font-size: 16px; }
.result { display: grid; grid-template-columns: 597px 343px; justify-content: space-between; margin-top: 21px; }
.map { position: relative; overflow: hidden; font-family: Roboto, sans-serif; height: 483px; }
.canvas { display: block; width: 100%; height: 100%; }
.canvas text { font-family: Roboto, sans-serif; }
.town { font-size: 39px; fill: #2e3033; stroke: #fff; stroke-width: 7px; stroke-linejoin: round; paint-order: stroke; }
.town.city { font-size: 63px; font-weight: 500; }
.town.dim { font-size: 42px; fill: #77797c; }
.shield { font-size: 30px; font-weight: 500; text-anchor: middle; fill: #4a4413; }
.autobahn { font-size: 30px; font-weight: 700; text-anchor: middle; fill: #fff; }
.pin { font-size: 45px; font-weight: 500; text-anchor: middle; fill: #fff; }
.zoom { position: absolute; right: 11px; bottom: 26px; display: flex; flex-direction: column; width: 42px; background: #fff; }
.zoom button { height: 42px; padding: 4px 0 0; background: none; }
.zoom button + button { margin: 0 5px; border-top: 1px solid #e6e6e6; }
.google { position: absolute; left: 10px; bottom: 2px; font-family: Inter, sans-serif; font-size: 18px; font-weight: 500; line-height: 24px; text-shadow: 0 0 2px #fff; color: #4285f4; }
.google span:nth-child(2), .google span:nth-child(6) { color: #ea4335; }
.google span:nth-child(3) { color: #f9b906; }
.google span:nth-child(5) { color: #34a853; }
.legal { position: absolute; right: 0; bottom: 0; display: flex; gap: 10px; height: 14px; padding: 0 6px 0 5px; background: rgba(245, 245, 245, .75); font-size: 11px; line-height: 15px; color: #000; white-space: nowrap; }
.routes h3 { margin: 1px 0 8px; font-size: 16px; line-height: 20px; white-space: nowrap; }
.legal a { color: #0000ee; }
.route { height: 146px; margin-bottom: 8px; padding: 10px; border-radius: 16px; }
.route.green { background: #c6ffe3; }
.route.blue { background: #d9dfff; }
.route h4 { color: #a6b4bf; font-size: 17px; font-weight: 400; line-height: 22px; }
.facts { display: grid; grid-template-columns: 177px 1fr; margin-bottom: 20px; font-size: 17px; line-height: 50px; height: 50px; white-space: nowrap; }
.facts strong { color: #078a63; font-size: 35px; font-weight: 400; }
.route .primary { display: block; }
</style>
